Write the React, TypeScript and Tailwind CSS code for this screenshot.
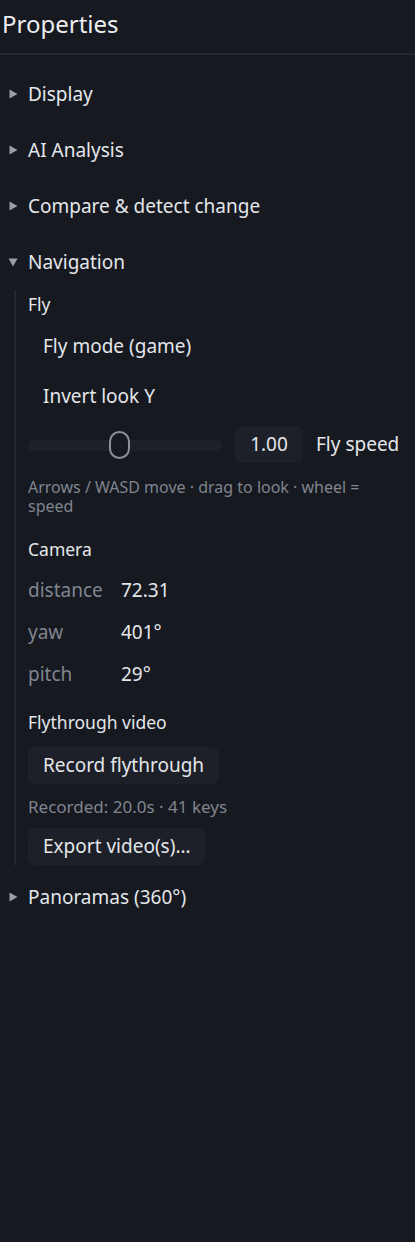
import React from "react";

function Tri({ open }: { open?: boolean }) {
  return (
    <svg width="10" height="10" viewBox="0 0 10 10" className="shrink-0">
      {open ? (
        <polygon points="0.5,1.5 9.5,1.5 5,9.5" fill="#9aa0aa" />
      ) : (
        <polygon points="1.5,0.5 9.5,5 1.5,9.5" fill="#9aa0aa" />
      )}
    </svg>
  );
}

function Section({ label, open }: { label: string; open?: boolean }) {
  return (
    <div className="flex h-[56px] items-center gap-[10px] pl-[8px]">
      <Tri open={open} />
      <span className="text-[19px] text-[#e4e6ea]">{label}</span>
    </div>
  );
}

export default function App() {
  return (
    <div
      className="min-h-[1242px] w-[415px] bg-[#161920] text-[#e4e6ea]"
      style={{ fontFamily: '"Noto Sans", "Open Sans", sans-serif' }}
    >
      <div className="flex h-[55px] items-center border-b-2 border-[#252830] pb-[6px] pl-[2px]">
        <h1 className="text-[24px] text-[#eceef1]">Properties</h1>
      </div>
      <div className="pt-[11px]">
        <Section label="Display" />
        <Section label="AI Analysis" />
        <Section label="Compare & detect change" />
        <Section label="Navigation" open />
        <div className="ml-[14px] flex flex-col border-l-2 border-[#242730] pl-[12px]">
          <div className="flex h-[28px] items-center text-[17.5px]">Fly</div>
          <div className="flex h-[50px] items-center pl-[15px] pt-[7px] text-[19px]">Fly mode (game)</div>
          <div className="flex h-[50px] items-center pl-[15px] pt-[6px] text-[19px]">Invert look Y</div>
          <div className="mt-[8px] flex h-[37px] items-center">
            <div className="relative mt-[2px] h-[11px] w-[194px] rounded-full bg-[#1d2028]">
              <div className="absolute left-[81px] top-[-9px] h-[28px] w-[21px] rounded-full border-2 border-[#8b909a] bg-[#161920]" />
            </div>
            <div className="ml-[13px] flex h-[37px] w-[68px] items-center justify-center rounded-[7px] bg-[#1d2028] text-[19px]">
              1.00
            </div>
            <span className="ml-[13px] text-[19px]">Fly speed</span>
          </div>
          <div className="mt-[15px] pr-[20px] text-[16px] leading-[19px] text-[#80858f]">
            Arrows / WASD move · drag to look · wheel = speed
          </div>
          <div className="mt-[20px] text-[17.5px]">Camera</div>
          <div className="mt-[7px] flex flex-col">
            {[
              ["distance", "72.31"],
              ["yaw", "401°"],
              ["pitch", "29°"],
            ].map(([k, v]) => (
              <div key={k} className="flex h-[42px] items-center text-[19px]">
                <span className="w-[93px] text-[#80858f]">{k}</span>
                <span>{v}</span>
              </div>
            ))}
          </div>
          <div className="mt-[14px] text-[17.5px]">Flythrough video</div>
          <button className="mt-[11px] flex h-[37px] w-fit items-center rounded-[7px] bg-[#1d2028] px-[15px] text-[19px] text-[#e4e6ea]">
            Record flythrough
          </button>
          <div className="mt-[10px] text-[17px] text-[#80858f]">Recorded: 20.0s · 41 keys</div>
          <button className="mt-[9px] flex h-[37px] w-fit items-center rounded-[7px] bg-[#1d2028] px-[15px] text-[19px] text-[#e4e6ea]">
            Export video(s)…
          </button>
        </div>
        <div className="mt-[4px]">
          <Section label="Panoramas (360°)" />
        </div>
      </div>
    </div>
  );
}
